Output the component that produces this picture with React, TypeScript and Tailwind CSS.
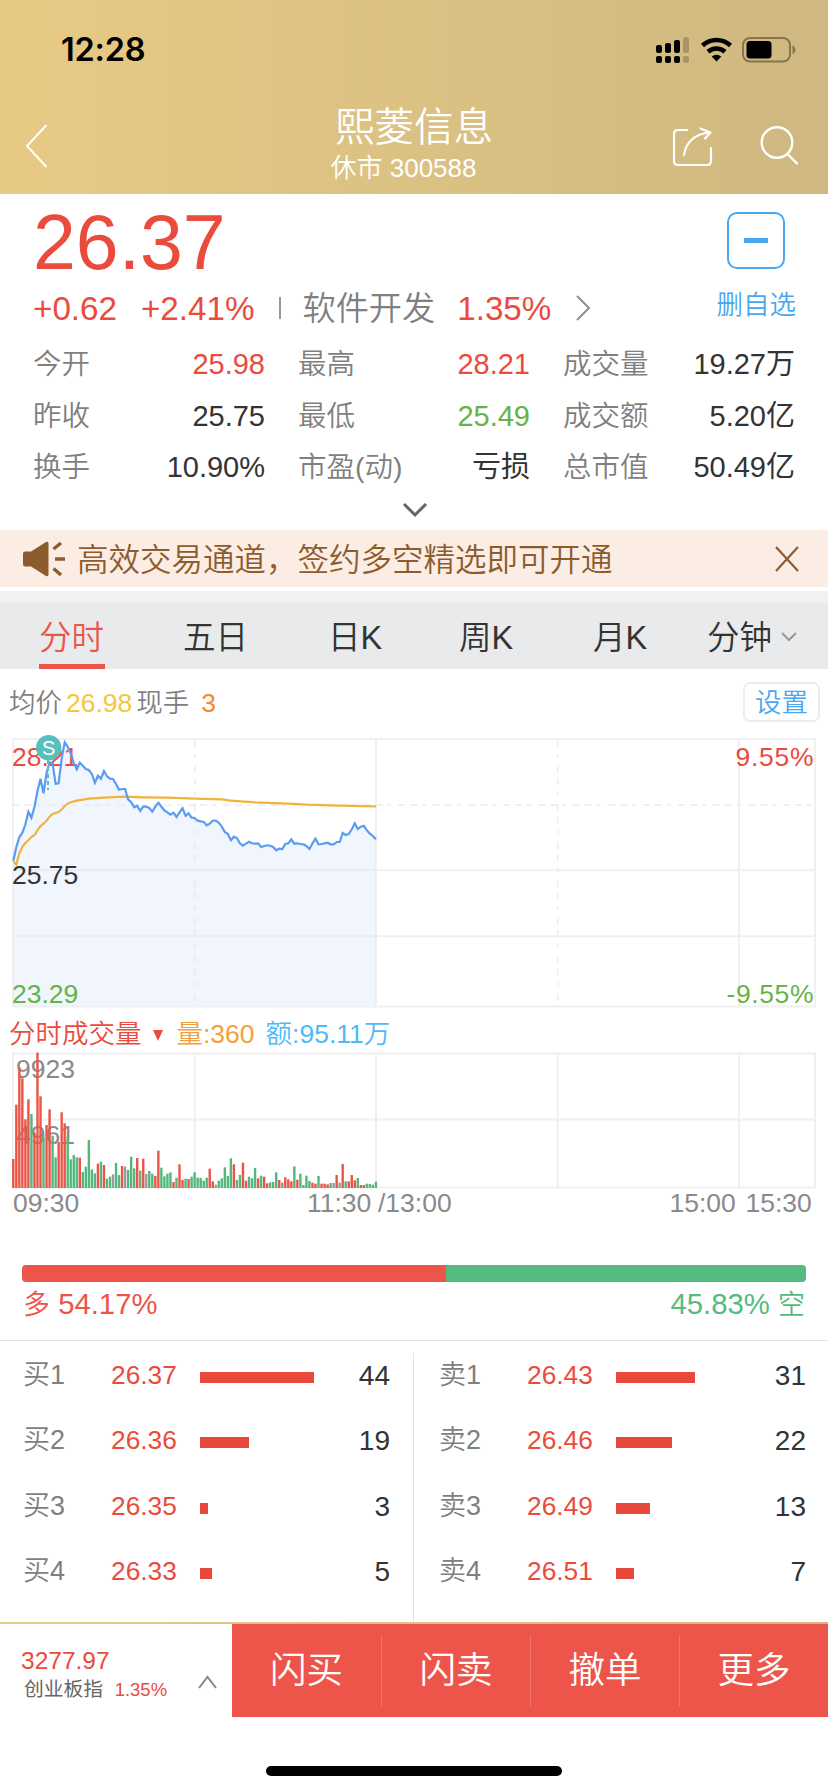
import { clsx } from "clsx";

type Tone = "up" | "down" | "flat";

interface Stat {
  label: string;
  value: string;
  tone?: Tone;
}

interface Order {
  label: string;
  price: string;
  amount: number;
  width: number;
}

const TONES: Record<Tone, string> = {
  up: "text-[#ea4b3d]",
  down: "text-[#67b346]",
  flat: "text-[#333333]",
};

const STATS: Stat[][] = [
  [
    { label: "今开", value: "25.98", tone: "up" },
    { label: "昨收", value: "25.75" },
    { label: "换手", value: "10.90%" },
  ],
  [
    { label: "最高", value: "28.21", tone: "up" },
    { label: "最低", value: "25.49", tone: "down" },
    { label: "市盈(动)", value: "亏损" },
  ],
  [
    { label: "成交量", value: "19.27万" },
    { label: "成交额", value: "5.20亿" },
    { label: "总市值", value: "50.49亿" },
  ],
];

const BUYS: Order[] = [
  { label: "买1", price: "26.37", amount: 44, width: 114 },
  { label: "买2", price: "26.36", amount: 19, width: 49 },
  { label: "买3", price: "26.35", amount: 3, width: 8 },
  { label: "买4", price: "26.33", amount: 5, width: 12 },
];

const SELLS: Order[] = [
  { label: "卖1", price: "26.43", amount: 31, width: 79 },
  { label: "卖2", price: "26.46", amount: 22, width: 56 },
  { label: "卖3", price: "26.49", amount: 13, width: 34 },
  { label: "卖4", price: "26.51", amount: 7, width: 18 },
];

const ACTIONS = ["闪买", "闪卖", "撤单", "更多"];

// one sample per minute 09:30 - 11:30, in thirds of a pixel from the chart top
const PRICES = [
  392, 352, 322, 308, 283, 245, 263, 230, 183, 146, 190, 130, 97, 100, 161, 160, 85, 37, 50, 70,
  98, 118, 98, 107, 117, 120, 132, 158, 137, 146, 123, 139, 146, 147, 162, 179, 177, 177, 208, 217,
  232, 227, 243, 230, 230, 234, 245, 230, 218, 230, 241, 247, 254, 248, 261, 247, 235, 257, 250, 263,
  264, 272, 274, 276, 286, 281, 272, 272, 278, 290, 306, 312, 331, 320, 324, 340, 347, 341, 335, 340,
  341, 340, 351, 348, 346, 347, 351, 361, 356, 357, 342, 340, 328, 341, 340, 342, 343, 348, 357, 340,
  326, 343, 342, 340, 338, 343, 343, 336, 336, 309, 315, 312, 298, 280, 297, 290, 287, 301, 311, 318,
  328,
];

const AVERAGES: [number, number][] = [
  [0, 394], [1, 404], [2, 370], [3, 350], [4, 339], [5, 331], [6, 321], [7, 315], [8, 301],
  [9, 288], [10, 281], [11, 272], [12, 260], [13, 252], [14, 249], [15, 246], [16, 238], [17, 228],
  [18, 221], [19, 217], [21, 212], [25, 206], [30, 203], [37, 200], [43, 202], [51, 203], [60, 206],
  [69, 208], [72, 212], [80, 217], [91, 221], [97, 224], [108, 227], [120, 229],
];

const VOLUMES = [
  87, 250, 362, 329, 206, 266, 222, 167, 406, 275, 151, 189, 236, 157, 92, 138, 227, 194, 154, 86,
  99, 92, 91, 48, 64, 144, 56, 44, 73, 79, 69, 28, 34, 41, 75, 39, 66, 64, 54, 94,
  59, 90, 52, 88, 42, 51, 43, 36, 112, 61, 35, 43, 47, 18, 31, 71, 24, 28, 27, 34,
  47, 31, 30, 22, 31, 58, 20, 10, 22, 29, 62, 36, 89, 71, 24, 39, 76, 22, 34, 29,
  60, 29, 37, 34, 14, 17, 18, 47, 24, 16, 32, 26, 20, 65, 25, 43, 9, 37, 21, 16,
  13, 36, 13, 13, 11, 15, 15, 39, 16, 72, 20, 20, 39, 23, 30, 9, 9, 13, 12, 10,
  19,
];

// r = up, g = down, x = unchanged
const VOLUME_SIDES =
  "rrrrrrgrrrgrrggrrrgg" +
  "ggrgggggrgrggxggrxgg" +
  "grgrxggrrggggrgrrgrg" +
  "gggggrrxgggggrggrrgg" +
  "grgrrgggrgrrrgrggggr" +
  "rgrrrgxrxrgrrrgrrggg" +
  "g";

const SIDE_FILL: Record<string, string> = { r: "#ea5548", g: "#53b87e", x: "#9b9b9b" };

const minuteX = (i: number) => 13.3 + i * 3.022;

const pricePoints = PRICES.map((y, i) => `${minuteX(i).toFixed(1)},${(y / 3).toFixed(1)}`).join(" ");
const averagePoints = AVERAGES.map(([i, y]) => `${minuteX(i).toFixed(1)},${(y / 3).toFixed(1)}`).join(" ");

const StatusBar = () => (
  <div className="flex h-[100px] items-center justify-between pr-[32px] pl-[61px]">
    <span className="mt-[1px] font-['Inter'] text-[32.5px] font-semibold tracking-[-0.2px] text-black">12:28</span>
    <svg width="141" height="30" viewBox="0 0 141 30">
      {[0, 9, 18, 27].map((x, i) => (
        <g key={x} fill={i === 3 ? "#a89563" : "#000"}>
          <rect x={x + 1} y={[10, 8, 5, 2][i]} width="6" height={[8, 10, 13, 16][i]} rx="2" />
          <rect x={x + 1} y="21" width="6" height="7" rx="2" />
        </g>
      ))}
      <g fill="none" stroke="#000" strokeWidth="4.6">
        <path d="M47.5 10.5a20.5 20.5 0 0 1 28 0" />
        <path d="M53 16.8a12.6 12.6 0 0 1 17 0" />
      </g>
      <path d="M61.5 26.5l-4.8-5a7.2 7.2 0 0 1 9.6 0z" fill="#000" />
      <rect x="88" y="3" width="47" height="23.5" rx="7" fill="none" stroke="#857550" strokeWidth="2" />
      <rect x="91.5" y="6" width="25" height="17.5" rx="3.5" fill="#000" />
      <path d="M137.5 10.5c4 1.500 4 7 0 8.500z" fill="#857550" />
    </svg>
  </div>
);

const Header = () => (
  <header className="h-[194px] bg-linear-to-r from-[#e7ca84] to-[#cfb881] text-white">
    <StatusBar />
    <div className="grid h-[94px] grid-cols-[1fr_200px_1fr]">
      <svg className="mt-[24px] ml-[25px]" width="24" height="44" viewBox="0 0 24 44" fill="none" stroke="#fff" strokeWidth="2">
        <path d="M21.5 1L2 22l19.5 21" />
      </svg>
      <div className="flex flex-col items-center">
        <h1 className="mt-[4px] text-[39.5px] leading-[46px] font-[350]">熙菱信息</h1>
        <p className="mt-[1px] -ml-[21px] text-[26px] leading-[34px] font-[350]">休市 300588</p>
      </div>
      <div className="flex items-start justify-end gap-[46px] pt-[24px] pr-[29px]">
        <svg width="42" height="44" viewBox="0 0 42 44" fill="none" stroke="#fff" strokeWidth="2.2" strokeLinecap="round" strokeLinejoin="round">
          <path d="M16 6H7Q3 6 3 10v27q0 4 4 4h29q4 0 4-4V24" />
          <path d="M13 31C15 18 24 9.5 39 8.5M29.5 4.5l10 4-5.5 6" />
        </svg>
        <svg width="40" height="42" viewBox="0 0 40 42" fill="none" stroke="#fff" strokeWidth="2.4" strokeLinecap="round">
          <circle cx="18" cy="18.5" r="15.3" />
          <path d="M28.5 30L38 39.500" />
        </svg>
      </div>
    </div>
  </header>
);

const Quote = () => (
  <section className="flex h-[336px] flex-col pt-[10px] pr-[33px] pl-[33px]">
    <div className="flex justify-between">
      <div>
        <div className="text-[77px] leading-[77px] text-[#ea4b3d]">26.37</div>
        <div className="mt-[7px] flex h-[42px] items-center text-[33.2px] leading-[42px] text-[#ea4b3d]">
          <span>+0.62</span>
          <span className="ml-[24px]">+2.41%</span>
          <i className="mb-[3px] ml-[25px] h-[22px] w-[2px] bg-[#999999]" />
          <span className="ml-[21px] font-[350] text-[#7f7f7f]">软件开发</span>
          <span className="ml-[22px]">1.35%</span>
          <svg className="mb-[3px] ml-[24px]" width="16" height="26" viewBox="0 0 16 26" fill="none" stroke="#8e8e8e" strokeWidth="2">
            <path d="M2 1l12 12L2 25" />
          </svg>
        </div>
      </div>
      <div className="flex flex-col items-center pt-[8px] text-[#49a7ef]">
        <div className="flex h-[57px] w-[58px] items-center justify-center rounded-[10px] border-2 border-[#49a7ef]">
          <i className="h-[5px] w-[24px] bg-[#49a7ef]" />
        </div>
        <span className="mt-[16px] -mr-[1px] text-[26.5px] leading-[40px] font-[350]">删自选</span>
      </div>
    </div>
    <div className="mt-[9px] grid grid-cols-[232px_232px_232px] justify-between text-[28.5px] leading-[51.5px]">
      {STATS.map((column) => (
        <dl key={column[0].label}>
          {column.map(({ label, value, tone = "flat" }) => (
            <div className="flex h-[51.5px] items-baseline justify-between" key={label}>
              <dt className="font-[350] text-[#7f7f7f]">{label}</dt>
              <dd className={clsx("text-[29px]", TONES[tone])}>{value}</dd>
            </div>
          ))}
        </dl>
      ))}
    </div>
    <svg className="mt-[8px] mr-[-2px] self-center" width="26" height="16" viewBox="0 0 26 16" fill="none" stroke="#666" strokeWidth="3">
      <path d="M2 2l11 11L24 2" />
    </svg>
  </section>
);

const Notice = () => (
  <section className="flex h-[57px] items-center bg-[#fcede4] pr-[29px] pl-[22px] text-[#8d5c2e]">
    <svg width="44" height="36" viewBox="0 0 44 36">
      <path d="M1 10.500h8L24 1q2.500-1 2.500 1.500v31Q26.500 36 24 35L9 25.500H3q-2 0-2-2v-11q0-2 2-2z" fill="currentColor" />
      <path d="M31.5 8L39 2M33 18h10M31.5 27.5L39 34" stroke="currentColor" strokeWidth="3.4" />
    </svg>
    <span className="mt-[3px] ml-[11px] text-[31.5px] leading-[54px] font-[350] whitespace-nowrap">
      高效交易通道，签约多空精选即可开通
    </span>
    <svg className="ml-auto" width="24" height="26" viewBox="0 0 24 26" stroke="currentColor" strokeWidth="2.2">
      <path d="M1 1l22 24M23 1L1 25" />
    </svg>
  </section>
);

const Tabs = () => (
  <nav className="mt-[4px] flex h-[78px] border-t-[11px] border-[#f1f1f1] bg-[#e9eaec] pl-[39px] text-[32.5px] leading-[72px] font-[350] text-[#333333]">
    <div className="mr-[78px] h-[67px] w-[66px] border-b-[5px] border-[#ec564a] text-[#ec564a]">分时</div>
    <div className="w-[145px]">五日</div>
    <div className="w-[131px]">日K</div>
    <div className="w-[134px]">周K</div>
    <div className="w-[114px]">月K</div>
    <div className="flex h-[67px] items-center gap-[9px]">
      <span className="pt-[5px]">分钟</span>
      <svg className="mt-[2px]" width="16" height="10" viewBox="0 0 16 10" fill="none" stroke="#999" strokeWidth="2">
        <path d="M1 1l7 7 7-7" />
      </svg>
    </div>
  </nav>
);

const PriceChart = () => (
  <svg className="block" width="828" height="280" viewBox="0 0 828 280">
    <polygon points={`13.3,275.5 ${pricePoints} 376,275.5`} fill="#f0f5fe" />
    <g stroke="#e6e6e6" strokeOpacity="0.6" strokeWidth="2" fill="none">
      <path d="M13 9H815V276.500H13zM13 140.300H815M13 206.300H815M376 9V276M739 9V276" />
      <path d="M13 75H815" strokeDasharray="7 5 7 5 4 7" />
      <path d="M194.8 10V276M557.7 10V276" strokeDasharray="7 7 4 8 7 5" />
    </g>
    <g fontSize="26.5">
      <text x="12" y="36" fill="#ea4b3d">28.21</text>
      <text x="12" y="154" fill="#333333">25.75</text>
      <text x="12" y="273" fill="#67b346">23.29</text>
      <text x="813.5" y="36" fill="#ea4b3d" textAnchor="end" textLength="78">9.55%</text>
      <text x="813.5" y="273" fill="#67b346" textAnchor="end" textLength="87">-9.55%</text>
    </g>
    <polyline points={averagePoints} fill="none" stroke="#f2b33d" strokeWidth="2.2" />
    <polyline points={pricePoints} fill="none" stroke="#5a9cf0" strokeWidth="2.2" />
    <path d="M48 30V60" stroke="#57bfbd" strokeWidth="2" strokeDasharray="4 3" />
    <circle cx="48.7" cy="17.7" r="12.7" fill="#57bfbd" />
    <text x="48.7" y="25" fill="#fff" fontSize="20" textAnchor="middle">S</text>
  </svg>
);

const VolumeChart = () => (
  <svg className="block" width="828" height="172" viewBox="0 0 828 172">
    <path
      d="M13 3.500H815V137.500H13zM13 69.500H815M194.800 3V138M376 3V138M557.700 3V138M739 3V138"
      fill="none"
      stroke="#f0f0f0"
      strokeWidth="2"
    />
    <g fontSize="26.5" fill="#8a8a8a">
      <text x="16" y="28">9923</text>
      <text x="16" y="94">4961</text>
    </g>
    {VOLUMES.map((volume, i) => (
      <rect
        key={i}
        x={minuteX(i) - 1.2}
        y={138 - volume / 3}
        width="2.4"
        height={volume / 3}
        fill={SIDE_FILL[VOLUME_SIDES[i]]}
      />
    ))}
    <g fontSize="26.5" fill="#8a8a8a">
      <text x="13" y="162">09:30</text>
      <text x="307" y="162">11:30</text>
      <text x="378" y="162">/13:00</text>
      <text x="669.5" y="162">15:00</text>
      <text x="745.5" y="162">15:30</text>
    </g>
  </svg>
);

const Chart = () => (
  <section>
    <div className="flex h-[61px] items-center pt-[5px] pr-[8px] pl-[9px] text-[26.5px] leading-[40px]">
      <span className="pt-[1px] font-[350] text-[#7f7f7f]">均价</span>
      <span className="ml-[4px] pt-[1px] text-[#f5c63c]">26.98</span>
      <span className="ml-[4px] pt-[1px] font-[350] text-[#7f7f7f]">现手</span>
      <span className="ml-[12px] pt-[1px] text-[#f28a2e]">3</span>
      <button className="ml-auto h-[40px] w-[77px] rounded-[7px] border-2 border-[#ececec] leading-[38px] font-[350] text-[#49a7ef]">
        设置
      </button>
    </div>
    <PriceChart />
    <div className="flex h-[40px] items-center pt-[8px] pl-[9px] text-[26.5px] leading-[40px] font-[350]">
      <span className="text-[#ea4b3d]">分时成交量</span>
      <svg className="mt-[2px] ml-[10px]" width="12" height="12" viewBox="0 0 12 12">
        <path d="M1 1h10L6 12z" fill="#ea4b3d" />
      </svg>
      <span className="ml-[13px] text-[#f2a03a]">量:360</span>
      <span className="ml-[11px] text-[#4fb9f7]">额:95.11万</span>
    </div>
    <VolumeChart />
  </section>
);

const LongShort = () => (
  <section className="mx-[22px] mt-[43px] h-[75px]">
    <div className="flex h-[17px] overflow-hidden rounded-[4px]">
      <div className="w-[424px] bg-[#ed554a]" />
      <div className="flex-1 bg-[#56bb80]" />
    </div>
    <div className="flex justify-between px-[1px] text-[29.3px] leading-[44px] font-[350]">
      <span className="text-[#ed554a]">
        <span className="text-[27px]">多</span> 54.17%
      </span>
      <span className="text-[#56bb80]">
        45.83% <span className="text-[27px]">空</span>
      </span>
    </div>
  </section>
);

const OrderList = ({ orders, right }: { orders: Order[]; right?: boolean }) => (
  <div
    className={clsx(
      "w-[414px] leading-[65.3px]",
      right ? "pr-[22px] pl-[25px]" : "border-r border-[#e2e2e2] pr-[23px] pl-[23px]",
    )}
  >
    <div className="-mt-[10px]">
      {orders.map(({ label, price, amount, width }) => (
        <div className="flex h-[65.3px] items-center" key={label}>
          <span className="w-[87px] text-[27px] font-[350] text-[#7f7f7f]">{label}</span>
          <span className="w-[90px] pl-[1px] text-[26.3px] text-[#ea4b3d]">{price}</span>
          <i className="mt-[4px] h-[11px] bg-[#e9493c]" style={{ width }} />
          <span className="ml-auto text-[28px] text-[#333333]">{amount}</span>
        </div>
      ))}
    </div>
  </div>
);

const BottomBar = () => (
  <footer className="flex h-[93px]">
    <div className="flex w-[232px] items-start justify-between pt-[23px] pr-[15px] pl-[21px]">
      <div>
        <div className="text-[24.5px] leading-[27px] text-[#ea4b3d]">3277.97</div>
        <div className="ml-[3px] text-[19.8px] leading-[30px] text-[#666666]">
          创业板指 <span className="ml-[6px] text-[18.5px] text-[#ea4b3d]">1.35%</span>
        </div>
      </div>
      <svg className="mt-[28px]" width="19" height="14" viewBox="0 0 19 14" fill="none" stroke="#888" strokeWidth="2">
        <path d="M1 13L9.5 2 18 13" />
      </svg>
    </div>
    <div className="grid flex-1 grid-cols-4 items-center bg-[#ed554a] text-center text-[36.5px] font-[350] text-white">
      {ACTIONS.map((action, i) => (
        <div className={clsx("h-[70px] leading-[70px]", i > 0 && "border-l border-[#f1776e]")} key={action}>
          {action}
        </div>
      ))}
    </div>
  </footer>
);

export default function App() {
  return (
    <div className="h-[1792px] w-[828px] overflow-hidden bg-white font-['Liberation_Sans','Noto_Sans_CJK_SC',sans-serif]">
      <Header />
      <Quote />
      <Notice />
      <Tabs />
      <Chart />
      <LongShort />
      <div className="flex h-[282px] border-t border-[#e2e2e2] pt-[12px]">
        <OrderList orders={BUYS} />
        <OrderList orders={SELLS} right />
      </div>
      <div className="h-[2px] bg-linear-to-r from-[#e7ca84] to-[#cfb881]" />
      <BottomBar />
      <div className="mx-auto mt-[49px] h-[10px] w-[296px] rounded-full bg-black" />
    </div>
  );
}
